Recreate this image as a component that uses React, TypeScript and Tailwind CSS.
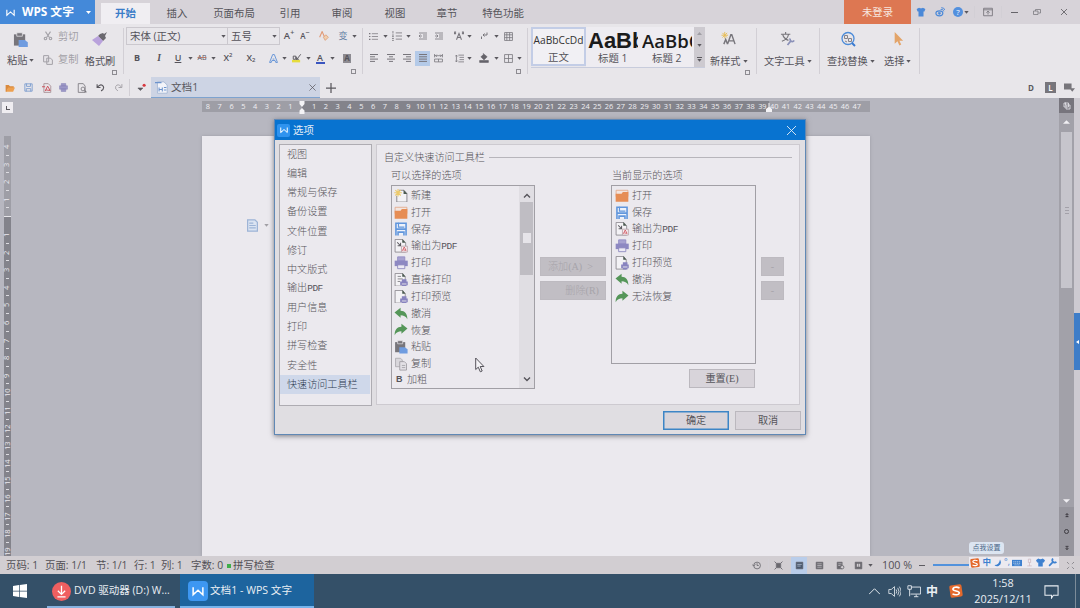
import React from "react";

type P = { className?: string; children?: React.ReactNode };

const Svg = ({ className = "w-4 h-4", children }: P) => (
  <svg viewBox="0 0 16 16" className={"shrink-0 " + className} fill="none" stroke="currentColor">
    {children}
  </svg>
);
const Caret = ({ className = "" }: P) => (
  <svg viewBox="0 0 5 3" className={"w-[5px] h-[3px] shrink-0 " + className}>
    <path d="M.3 0h4.400L2.500 2.700z" fill="#5a585e" />
  </svg>
);
const Sep = ({ className = "h-4" }: P) => <div className={"w-px shrink-0 bg-[#d2cfd5] " + className} />;
const Cell = ({ className = "", children }: P) => (
  <div className={"flex h-4 shrink-0 items-center justify-center whitespace-nowrap " + className}>{children}</div>
);
const Corner = () => <div className="mr-[6px] h-[5px] w-[5px] border border-[#8d8b91]" />;

const Lines = ({ w }: { w: [number, number][] }) => (
  <Svg>
    {w.map(([a, b], i) => (
      <path key={i} d={`M${a} ${4.5 + i * 2.3}H${b}`} stroke="#77757b" />
    ))}
  </Svg>
);

const WLogo = ({ className = "w-3 h-3" }: P) => (
  <Svg className={className}>
    <path d="M1.500 3v10l6.500-6 6.500 6V3M1.500 13l3-3" stroke="#fff" strokeWidth="2" />
  </Svg>
);

const icons: Record<string, React.ReactNode> = {
  new: (
    <Svg>
      <path d="M5.500 1.500h6l3.500 4v10h-12V8" fill="#f3f2f5" stroke="#7b797f" />
      <path d="M11 1l4.500 5h-4.500z" fill="#4b5a50" stroke="none" />
      <path d="M4.500 0v9M0 4.500h9M1.300 1.300l6.400 6.400M7.700 1.300L1.300 7.700" stroke="#ecca6c" strokeWidth="1.300" />
    </Svg>
  ),
  open: (
    <Svg>
      <path d="M1 9V1.500h14V9" fill="#f2e5df" stroke="#e3a98a" />
      <path d="M.5 5.500h7l1.500-2h6.500V15H.5z" fill="#e68d55" stroke="none" />
    </Svg>
  ),
  save: (
    <Svg>
      <path d="M1.500 1.500h13V15h-13z" fill="#eef2fa" stroke="none" />
      <path d="M2 16V1.500h12V16M2 8.500h12M4.500 16v-4h7v4" stroke="#6196dc" strokeWidth="1.900" />
      <path d="M5 1v5h7" stroke="#6196dc" strokeWidth="1.400" />
    </Svg>
  ),
  pdf: (
    <Svg>
      <path d="M1 .5h9l3.500 4V15.500H1z" fill="#f3f2f5" stroke="#88868c" />
      <path d="M9.500 0l4 4.500h-4z" fill="#4b5a50" stroke="none" />
      <path d="M3.500 4l4 4M7.500 4.500V8H4" stroke="#5e5c62" strokeWidth="1.200" />
      <path d="M8.500 8.500h7v7h-7z" fill="#f7eef0" stroke="#b8a0a7" />
      <path d="M9.500 14l2.300-4.500 2.200 4-3.500-.7" stroke="#cf5560" />
    </Svg>
  ),
  print: (
    <Svg>
      <path d="M4 1h8.500v5H4z" fill="#a7a2d0" stroke="#8f8ac2" />
      <path d="M.5 5.500h15.500v6.500H.5z" fill="#8d88c2" stroke="none" />
      <path d="M4 10.500h8.500v4.500H4z" fill="#eceaf4" stroke="#8a85bd" />
    </Svg>
  ),
  direct: (
    <Svg>
      <path d="M1 .5h9l3 4V15.500H1z" fill="#f3f2f5" stroke="#88868c" />
      <path d="M9.500 0l4 4.500h-4z" fill="#4b5a50" stroke="none" />
      <path d="M4 4h4M4 7h6M4 10h3" stroke="#77757b" />
      <path d="M7 10h9v4.500H7zM9 7.500h5.500v8.500H9z" fill="#8883bf" stroke="none" />
      <path d="M9 13h5.500" stroke="#eee" />
    </Svg>
  ),
  preview: (
    <Svg>
      <path d="M1 .5h9l3 4V15.500H1z" fill="#f3f2f5" stroke="#88868c" />
      <path d="M9.500 0l4 4.500h-4z" stroke="none" fill="#4b5a50" />
      <path d="M7 10h9v4.500H7zM9 7.500h5.500v8.500H9z" fill="#8883bf" stroke="none" />
      <path d="M9 13h5.500" stroke="#eee" />
    </Svg>
  ),
  undo: (
    <Svg>
      <path d="M.3 6.500L7.500.8v3.500C12.500 4.500 15.800 7.800 15.500 14.500 13.800 11 11 9.800 7.500 9.800v3z" fill="#559659" stroke="none" />
    </Svg>
  ),
  redo: (
    <Svg>
      <path d="M15.700 6.500L8.500.8v3.500C3.500 4.500.2 7.800.5 14.500 2.200 11 5 9.800 8.500 9.800v3z" fill="#559659" stroke="none" />
    </Svg>
  ),
  paste: (
    <Svg>
      <path d="M1 2.500h12v12H1z" fill="#77757b" stroke="none" />
      <path d="M4 .8h6v3.700H4z" fill="#77757b" stroke="#e8e6ea" strokeWidth=".8" />
      <path d="M6 8.500h6.500L15.800 11v5H6z" fill="#6f9ce0" stroke="none" />
    </Svg>
  ),
  copy: (
    <Svg>
      <path d="M1.500 1.500h6l2 2v8h-8z" fill="#d9d7dc" stroke="#acaab0" />
      <path d="M6.500 5.500h5.500l2.500 2.500v7.500h-8z" fill="#e3e1e6" stroke="#9c9aa0" />
      <path d="M9 10h4M9 12.500h4" stroke="#a3a1a7" />
    </Svg>
  ),
};

const SogouS = ({ className = "w-3 h-3" }: P) => (
  <Svg className={className}>
    <rect x="1" y="1" width="14" height="14" rx="2" fill="#e4692c" stroke="none" transform="rotate(-8 8 8)" />
    <path d="M12 4.500C9 3 4.500 3.500 4.500 6s7.500 1.500 7.300 4.300C11.500 12.500 7 13 4 11.300" stroke="#fff" strokeWidth="1.900" />
  </Svg>
);

function TitleBar() {
  const tabs: [string, string][] = [
    ["插入", "w-[54px]"],
    ["页面布局", "w-[60px]"],
    ["引用", "w-[52px]"],
    ["审阅", "w-[52px]"],
    ["视图", "w-[54px]"],
    ["章节", "w-[50px]"],
    ["特色功能", "w-[62px]"],
  ];
  return (
    <div className="flex h-6 shrink-0 bg-[#d7d3d9] text-[10.400px]">
      <div className="flex w-[95px] items-center bg-[#4489d9] text-white">
        <WLogo className="ml-[6px] h-[9px] w-[9px]" />
        <span className="ml-[7px] w-[53px] whitespace-nowrap text-[11.800px] font-bold">WPS 文字</span>
        <svg viewBox="0 0 5 3" className="ml-[11px] h-[3px] w-[5px]"><path d="M0 0h5L2.500 3z" fill="#fff" /></svg>
      </div>
      <div className="mt-[3px] ml-[6px] flex h-[21px] w-[49px] items-center justify-center bg-[#f0eef2] pt-px font-bold text-[#3a7cc8]">开始</div>
      {tabs.map(([t, w]) => (
        <div key={t} className={"flex items-center justify-center whitespace-nowrap pt-[4px] " + w}>{t}</div>
      ))}
      <div className="ml-auto flex w-[67px] items-center justify-center bg-[#dd7752] pt-[2px] text-[10.400px] text-[#f7e6df]">未登录</div>
      <div className="flex w-[169px] items-center">
        <Svg className="ml-[5px] h-[10px] w-[10px]"><path d="M1 3l4-2q3 2 6 0l4 2-1.500 4H12v8H4V7H2.500z" fill="#4a88d8" stroke="none" /></Svg>
        <Svg className="ml-[9px] h-[10px] w-[10px] text-[#4a88d8]">
          <ellipse cx="7" cy="10" rx="5.500" ry="4" strokeWidth="2" /><circle cx="7" cy="10" r="1.800" fill="#4a88d8" /><path d="M9 4q4-2 5 3M10 1q5 0 6 4" strokeWidth="1.500" />
        </Svg>
        <div className="ml-[8px] flex h-[10px] w-[10px] items-center justify-center rounded-full bg-[#5390de] text-[8px] text-white">?</div>
        <Caret className="ml-[1px]" />
        <Sep className="ml-[5px] h-3 bg-[#aaa8ae]" />
        <Svg className="ml-[8px] h-[10px] w-[10px] text-[#77757b]"><path d="M1 2h14v12H1zM1 4.500h14M8 12V7M5.500 9L8 6.500 10.500 9" strokeWidth="1.400" /></Svg>
        <Sep className="ml-[8px] h-3 bg-[#aaa8ae]" />
        <div className="ml-[9px] h-px w-[7px] bg-[#66646a]" />
        <Svg className="ml-[15px] h-[8px] w-[8px] text-[#77757b]"><path d="M1 6h9v7H1zM5 6V3h10v7h-4" strokeWidth="1.500" /></Svg>
        <Svg className="ml-[19px] h-[8px] w-[8px] text-[#66646a]"><path d="M2 2l12 12M14 2L2 14" strokeWidth="1.800" /></Svg>
      </div>
    </div>
  );
}

function ClipboardGroup() {
  return (
    <div className="flex w-[123px] flex-col">
      <div className="flex h-[44px] pt-[3px]">
        <div className="flex w-[37px] flex-col pl-[7px]">
          <div className="ml-[6px] mt-[5px] h-[16px] [&>svg]:h-[15px] [&>svg]:w-[15px]">{icons.paste}</div>
          <div className="mt-[5px] flex items-center whitespace-nowrap leading-[17px]">粘贴<Caret className="ml-[2px]" /></div>
        </div>
        <div className="flex w-[45px] flex-col gap-[6px] pl-[6px] text-[#a3a1a7]">
          <div className="flex h-[18px] items-center gap-[5px] pt-px">
            <Svg className="h-[10px] w-[10px]"><path d="M4 1l6 9M12 1L6 10" strokeWidth="1.800" /><circle cx="4" cy="12" r="2" strokeWidth="1.800" /><circle cx="12" cy="12" r="2" strokeWidth="1.800" /></Svg>剪切
          </div>
          <div className="flex h-[18px] items-center gap-[5px] pt-px">
            <Svg className="h-[10px] w-[10px]"><path d="M1 1h8v10H1zM6 5h6l3 3v7H6z" fill="#e6e4e8" strokeWidth="1.600" /></Svg>复制
          </div>
        </div>
        <div className="flex w-[38px] flex-col items-center pr-[2px]">
          <Svg className="mt-1 h-4 w-4"><path d="M8 3l3-1 1 1 3-2-2 4 1 2-3 3-5-5z" fill="#6a686e" stroke="none" /><path d="M6 5l5 5-4 5-7-6z" fill="#b9a2dc" stroke="none" /></Svg>
          <div className="mt-[6px] whitespace-nowrap leading-[17px]">格式刷</div>
        </div>
      </div>
      <div className="mt-[2px] flex justify-end"><Corner /></div>
    </div>
  );
}

function FontGroup() {
  return (
    <div className="flex w-[238px] flex-col pt-[3px]">
      <div className="flex h-[18px] items-center">
        <div className="ml-[2px] flex h-[18px] w-[102px] items-center justify-between border border-[#cbc8ce] pt-px pr-px pl-[3px] text-[10.400px] whitespace-nowrap">宋体 (正文)<Caret /></div>
        <div className="flex h-[18px] w-[52px] items-center justify-between border border-l-0 border-[#cbc8ce] pt-px pr-[2px] pl-[3px] text-[10.400px] whitespace-nowrap">五号<Caret /></div>
        <Cell className="ml-px w-4 text-[9.500px] font-semibold">A<sup className="text-[7px]">+</sup></Cell>
        <Cell className="w-4 text-[8px] font-semibold">A<sup className="text-[7px]">−</sup></Cell>
        <Sep className="ml-px" />
        <Cell className="ml-px w-4"><Svg className="h-[10px] w-[10px]"><path d="M1 10L5 1l4 9" stroke="#e19a76" strokeWidth="1.800" /><path d="M7 10l4-4 4 4-5 5z" fill="#f0cfae" stroke="#d98b63" /></Svg></Cell>
        <Sep className="ml-px" />
        <Cell className="ml-px w-4 text-[9px] text-[#6681a5]">变</Cell>
        <Caret className="ml-px" />
      </div>
      <div className="mt-1 flex h-[18px] items-center text-[9px]">
        <Cell className="ml-[5px] w-4 font-bold">B</Cell>
        <Cell className="ml-[6px] w-4 font-[Liberation_Serif] text-[9.500px] font-bold italic">I</Cell>
        <Cell className="ml-[3px] w-4 font-semibold underline">U</Cell>
        <Caret className="ml-[2px]" />
        <Cell className="ml-px w-4 text-[7px] line-through decoration-[#b27a70]">AB</Cell>
        <Caret className="ml-px" />
        <Cell className="ml-1 w-4 font-semibold">X<sup className="text-[6px]">2</sup></Cell>
        <Cell className="ml-[7px] w-4 font-semibold">X<sub className="text-[6px]">2</sub></Cell>
        <Sep className="ml-[3px]" />
        <Cell className="ml-[2px] w-4"><Svg className="h-[9px] w-[9px]"><path d="M1 15L6.500 1h3L15 15h-3l-1.300-3.500H5.300L4 15zM6.500 9h3" stroke="#5d8fd6" strokeWidth="1.600" /></Svg></Cell>
        <Caret className="ml-px" />
        <Cell className="ml-[2px] w-4"><Svg className="h-[10px] w-[10px]"><path d="M0 11h13v4H0z" fill="#e6dc3c" stroke="none" /><path d="M2 5h4v5H2zM7 11l7-9M7 6v4h4" stroke="#5a585e" strokeWidth="1.500" /></Svg></Cell>
        <Caret className="ml-px" />
        <Cell className="ml-px w-4"><div className="flex h-[11px] w-[9px] items-center justify-center border-b-2 border-[#3a55bf] font-semibold leading-none">A</div></Cell>
        <Caret className="ml-[2px]" />
        <Cell className="ml-1 w-4"><div className="flex h-[9px] w-[8px] items-center justify-center bg-[#8d8b91] text-[8px] font-bold">A</div></Cell>
      </div>
      <div className="mt-[2px] flex justify-end"><Corner /></div>
    </div>
  );
}

function ParagraphGroup() {
  return (
    <div className="flex w-[164px] flex-col pt-[3px] text-[#77757b]">
      <div className="flex h-[18px] items-center">
        <Cell className="ml-[2px] w-4"><Svg className="h-[9px] w-[9px]"><path d="M5 3h11M5 8h11M5 13h11" strokeWidth="1.300" /><path d="M0 3h2.500M0 8h2.500M0 13h2.500" strokeWidth="2.200" /></Svg></Cell>
        <Caret className="ml-[2px]" />
        <Cell className="ml-px w-4"><Svg className="h-[10px] w-[10px]"><path d="M6 3h10M6 8h10M6 13h10M1.500 0v4M0 6.500h3M0 9h3M0 12h3M0 15h3" strokeWidth="1.300" /></Svg></Cell>
        <Caret className="ml-px" />
        <Sep className="ml-[3px]" />
        <Cell className="w-4"><Svg className="h-[8px] w-[8px]"><path d="M0 2h16M8 6h8M8 10h8M0 14h16M6 8H0M3 5L0 8l3 3" strokeWidth="1.600" /></Svg></Cell>
        <Cell className="w-4"><Svg className="h-[8px] w-[8px]"><path d="M0 2h16M8 6h8M8 10h8M0 14h16M0 8h6M3 5l3 3-3 3" strokeWidth="1.600" /></Svg></Cell>
        <Sep className="ml-[3px]" />
        <Cell className="w-4"><Svg className="h-[10px] w-[10px]"><path d="M4 14L8 4l4 10M5.500 10.500h5M0 1l3 4M3 1L0 5M13 1l3 4M16 1l-3 4" strokeWidth="1.700" /></Svg></Cell>
        <Caret />
        <Sep className="ml-[2px]" />
        <Cell className="ml-px w-4"><Svg className="h-[8px] w-[8px]"><path d="M14 1v5H6M9 3L6 6l3 3M3 9v5" strokeWidth="2" /></Svg></Cell>
        <Caret className="ml-[2px]" />
        <Cell className="ml-px w-4"><Svg className="h-[9px] w-[9px]"><path d="M1 1h14v14H1zM1 5h14M1 10h14M5 1v14M10 1v14" strokeWidth="1.400" /></Svg></Cell>
      </div>
      <div className="mt-1 flex h-[18px] items-center">
        <Cell className="ml-[3px] w-4"><Lines w={[[4, 12], [4, 9], [4, 12], [4, 9]]} /></Cell>
        <Cell className="ml-px w-4"><Lines w={[[4, 12], [6, 10], [4, 12], [6, 10]]} /></Cell>
        <Cell className="w-4"><Lines w={[[4, 12], [7, 12], [4, 12], [7, 12]]} /></Cell>
        <div className="flex h-[15px] w-[15px] items-center justify-center bg-[#b4cae8]"><Lines w={[[4, 12], [4, 12], [4, 12], [4, 12]]} /></div>
        <Cell className="w-4"><Svg className="h-[9px] w-[9px]"><path d="M1 0v6M15 0v6M1 3h14M5 1L3 3l2 2M11 1l2 2-2 2M1 9h14M1 14h14M1 9v5M15 9v5M8 9v5" strokeWidth="1.400" /></Svg></Cell>
        <Sep className="ml-1" />
        <Cell className="w-4"><Svg className="h-[9px] w-[9px]"><path d="M6 2h10M8 6h8M8 10h8M6 14h10M2.500 2v12M0 4.500L2.500 2 5 4.500M0 11.500L2.500 14 5 11.500" strokeWidth="1.400" /></Svg></Cell>
        <Caret />
        <Sep className="ml-[2px]" />
        <Cell className="ml-px w-4"><Svg className="h-[10px] w-[10px] text-[#65636a]"><path d="M3 6l5-4 5 4-5 5zM7 0v5M1 12h14v3H1z" fill="#65636a" /></Svg></Cell>
        <Caret className="ml-[2px]" />
        <Cell className="ml-px w-4"><Svg className="h-[9px] w-[9px]"><path d="M1 1h14v14H1zM1 8h14M8 1v14" strokeWidth="1.400" /></Svg></Cell>
        <Caret className="ml-px" />
      </div>
      <div className="mt-[2px] flex justify-end"><Corner /></div>
    </div>
  );
}

function StyleGallery() {
  return (
    <div className="mt-[3px] ml-[3px] flex h-[41px] w-[174px] border-b border-[#c8ccdc]">
      <div className="flex h-[39px] w-[55px] shrink-0 flex-col items-center border-2 border-[#c3cde6] bg-[#f1f0f4]">
        <span className="mt-[3px] h-[16px] text-[10.200px] leading-[16px] text-[#333]">AaBbCcDd</span>
        <span className="mt-[2px] text-[10.400px] leading-[15px]">正文</span>
      </div>
      <div className="flex w-[108px] shrink-0 bg-[#eeecf1]">
        <div className="flex w-[54px] flex-col pl-[2px]">
          <div className="w-[50px] overflow-hidden pt-[2px] font-[Liberation_Sans] text-[22px] leading-[23px] font-bold text-[#1b1b1b]">AaBb</div>
          <span className="pl-[10px] text-[10.400px] leading-[13px]">标题 1</span>
        </div>
        <div className="flex w-[54px] flex-col pl-[2px]">
          <div className="w-[50px] overflow-hidden pt-[2px] text-[18.500px] leading-[23px] font-semibold text-[#1b1b1b]">AaBbC</div>
          <span className="pl-[10px] text-[10.400px] leading-[13px]">标题 2</span>
        </div>
      </div>
      <div className="flex w-[11px] flex-col items-center justify-around bg-[#cdcad0]">
        <svg viewBox="0 0 5 3" className="h-[3px] w-[5px]"><path d="M0 3h5L2.500 0z" fill="#a09ea4" /></svg>
        <Caret />
        <div className="flex flex-col items-center gap-px"><div className="h-px w-[5px] bg-[#5a585e]" /><Caret /></div>
      </div>
    </div>
  );
}

const BigButton = ({ className = "", icon, label }: P & { icon: React.ReactNode; label: string }) => (
  <div className={"flex shrink-0 flex-col " + className}>
    <div className="mt-[7px] flex h-[17px] justify-center pr-[9px]">{icon}</div>
    <div className="mt-[5px] flex items-center whitespace-nowrap leading-[17px]">{label}<Caret className="ml-[2px]" /></div>
  </div>
);

function Ribbon() {
  return (
    <div className="flex h-[53px] shrink-0 bg-[#e8e6ea] text-[10.200px]">
      <ClipboardGroup />
      <Sep className="mt-1 h-[46px]" />
      <FontGroup />
      <Sep className="mt-1 h-[46px]" />
      <ParagraphGroup />
      <Sep className="mt-1 h-[46px]" />
      <StyleGallery />
      <div className="flex w-[51px] flex-col">
        <BigButton className="pl-[5px]" label="新样式" icon={
          <Svg className="h-[15px] w-[15px]"><path d="M4 1v7M.5 4.500h7M1.500 2l5 5M6.500 2l-5 5" stroke="#e8bd55" /><path d="M7 14l3.500-10h1L15 14M8.500 10.500h5M3 14l2-5 2 5" stroke="#77757b" strokeWidth="1.500" /></Svg>
        } />
        <div className="flex justify-end"><Corner /></div>
      </div>
      <Sep className="mt-1 h-[46px]" />
      <BigButton className="w-[62px] pl-[7px]" label="文字工具" icon={
        <Svg className="h-[15px] w-[15px]"><path d="M1 3.500h10M6 1v2.500M9 4q-1 5-7 7M3 4q1 4 6 6" stroke="#77757b" strokeWidth="1.200" /><path d="M8 15l4-5M11 8a2 2 0 1 0 4 2" stroke="#8a90b8" strokeWidth="1.800" /></Svg>
      } />
      <Sep className="mt-1 h-[46px]" />
      <BigButton className="w-[57px] pl-[7px]" label="查找替换" icon={
        <Svg className="h-4 w-4"><circle cx="8" cy="7.500" r="6" stroke="#4b8bd9" strokeWidth="1.300" /><path d="M12 12l3 3" stroke="#3b7bd0" strokeWidth="2" /><path d="M4.500 7.500V4.500h3v3zM8.500 7.500h3v3h-3zM5 10l2 1" stroke="#85838a" /></Svg>
      } />
      <BigButton className="w-[42px] pl-[7px]" label="选择" icon={
        <Svg className="h-[15px] w-[15px]"><path d="M5 1v12.500l3-2.500 2 4.500 2-1-2-4h4z" fill="#e3a469" stroke="none" /></Svg>
      } />
      <Sep className="mt-1 h-[46px]" />
    </div>
  );
}

function DocTabs() {
  const i = "h-[10px] w-[10px] ";
  return (
    <div className="flex h-[21px] shrink-0 items-center bg-[#e8e6ea] text-[#5a585e]">
      <Svg className={i + "ml-[5px]"}><path d="M1 3h5l2 2h6v3H5l-2 6H1z" fill="#d98a3e" stroke="none" /><path d="M5 7h11l-3 7H2z" fill="#eea04f" stroke="none" /></Svg>
      <Svg className="ml-[9px] h-[9px] w-[9px] text-[#7d9dcf]"><path d="M1.500 1.500h13v13h-13zM4.500 1v5h7V1M4 15v-5h8v5" strokeWidth="1.600" /></Svg>
      <Svg className={i + "ml-[9px]"}><path d="M3 1h7l4 4v10H3z" stroke="#a2898f" strokeWidth="1.300" /><path d="M5 13l4-8 4 7-7-1M0 6h5" stroke="#cb4d56" strokeWidth="1.500" /></Svg>
      <Svg className="ml-[7px] h-[9px] w-[9px]"><path d="M4 1h8v4H4zM1 5h14v6H1zM4 10h8v5H4z" fill="#9c98c8" stroke="#8884b8" /></Svg>
      <Svg className="ml-[9px] h-[10px] w-[10px] text-[#77757b]"><path d="M2 1h8l3 4v10H2z" strokeWidth="1.300" /><circle cx="9.500" cy="9.500" r="3" strokeWidth="1.300" /><path d="M12 12l3 3" strokeWidth="2" /></Svg>
      <Svg className="ml-[9px] h-[9px] w-[9px]"><path d="M3 7Q9 0 13 6q2 5-4 8M2 2v6h6" strokeWidth="2" /></Svg>
      <Svg className="ml-[9px] h-[9px] w-[9px] text-[#a09ea4]"><path d="M13 7Q7 0 3 6q-2 5 4 8M14 2v6H8" strokeWidth="1.600" /></Svg>
      <Sep className="ml-[6px] h-[17px]" />
      <Svg className={i + "ml-[6px]"}><path d="M3 8h8l-4 4z" fill="#5a585e" stroke="#5a585e" /><circle cx="13" cy="3.500" r="2.500" fill="#d8383e" stroke="none" /></Svg>
      <div className="ml-[5px] flex h-[21px] w-[169px] items-center border-b border-[#7ea3cf] bg-[#cdd4e4]">
        <Svg className="ml-[4px] h-[13px] w-[13px]"><path d="M3 1h8l4 4v10H3z" fill="#f3f4f9" stroke="#9fb3d2" /><path d="M0 2h8M5 8v5M9 8v5M5 10.500h4M11 8h3M11 11h3" stroke="#6c93cd" strokeWidth="1.300" /></Svg>
        <span className="ml-[3px] pt-[2px] text-[10.600px] whitespace-nowrap">文档1</span>
        <Svg className="mr-[4px] ml-auto h-[7px] w-[7px]"><path d="M1 1l14 14M15 1L1 15" strokeWidth="1.700" /></Svg>
      </div>
      <Svg className="ml-[6px] h-[10px] w-[10px]"><path d="M8 0v16M0 8h16" strokeWidth="2" /></Svg>
      <span className="ml-auto text-[8px] font-bold">D</span>
      <div className="ml-[11px] flex h-[11px] w-[11px] items-center justify-center bg-[#77757b] text-[8px] font-semibold text-white">L</div>
      <Svg className="mr-[5px] ml-[8px] h-[11px] w-[11px]"><path d="M0 2h11v9H0zM8 9h8l-4 5z" fill="#77757b" stroke="none" /></Svg>
    </div>
  );
}

const hNums = Array.from({ length: 56 }, (_, i) => i - 8);
const vNums = Array.from({ length: 24 }, (_, i) => i - 4);

function Workspace() {
  return (
    <div className="flex h-[458px] shrink-0 bg-[#b7b7c0]">
      <div className="flex w-[202px] flex-col overflow-hidden">
        <div className="mt-[4px] ml-[2px] flex h-[11px] w-[11px] shrink-0 items-center justify-center bg-[#efedf1]"><div className="h-[4px] w-[4px] border-b border-l border-[#5a585e]" /></div>
        <div className="mt-[23px] ml-[4px] flex h-[420px] w-[7px] flex-col items-center bg-[linear-gradient(#9e9ea6_80px,#e6e5e9_80px,#e6e5e9_81px,#83838b_81px)] text-[7.500px] leading-none text-[#eceaf0]">
          <div className="h-[2px] shrink-0" />
          {vNums.map((n) => (
            <div key={n} className="flex h-[17.600px] w-[7px] shrink-0 flex-col items-center">
              <div className="flex h-[17.600px] items-center justify-center"><span className="-rotate-90">{n === 0 ? "" : Math.abs(n)}</span></div>
              {n !== 0 && <div className="-mt-px h-px w-[3px] shrink-0 bg-[#dddce1]" />}
            </div>
          ))}
        </div>
      </div>
      <div className="flex w-[668px] flex-col">
        <div className="relative mt-[3px] flex h-[11px] shrink-0 items-center bg-[linear-gradient(90deg,#9e9ea6_100px,#83838b_100px,#83838b_567px,#9e9ea6_567px)] text-[7.400px] leading-none text-[#f0eff3]">
          {hNums.map((n) => (
            <span key={n} className="w-[11.810px] shrink-0 text-center">{n === 0 ? "" : Math.abs(n)}</span>
          ))}
          <svg viewBox="0 0 6 14" className="absolute top-0 left-[97px] h-[14px] w-[6px]"><path d="M.5 0h5v3L3 6 .5 3zM.5 13V9.500L3 7l2.500 2.500V13z" fill="#f4f3f6" /></svg>
          <svg viewBox="0 0 6 9" className="absolute top-[2px] left-[564px] h-[9px] w-[6px]"><path d="M0 9V6l2.500-2V0h1v4L6 6v3z" fill="#f4f3f6" /></svg>
        </div>
        <div className="mt-[24px] flex h-[420px] items-start bg-[#ebe9ee] shadow-[0_0_3px_#9b9ba4]">
          <Svg className="mt-[83px] ml-[44px] h-[13px] w-[13px]"><path d="M2 1h9l3 3v11H2z" fill="#dbe4f2" stroke="#9db4d6" strokeWidth="1.500" /><path d="M4 5h5M4 8h8M4 11h8" stroke="#9db4d6" strokeWidth="1.500" /></Svg>
          <Caret className="mt-[88px] ml-[5px] opacity-50" />
        </div>
      </div>
      <div className="ml-auto flex w-[15px] flex-col items-center bg-[#a2a1a9]">
        <div className="mb-[7px] flex h-[15px] w-full items-center justify-center bg-[#77757d]"><Svg className="h-[8px] w-[8px] text-[#e4e3e8]"><path d="M2 2h9v8H2zM6 6h8v8H6zM5 1v6" strokeWidth="1.700" /></Svg></div>
        <svg viewBox="0 0 8 4" className="h-[4px] w-[7px]"><path d="M4 0l4 4H0z" fill="#f0eff3" /></svg>
        <div className="mt-[8px] flex h-[156px] w-[11px] flex-col items-center justify-center gap-[2px] bg-[#c6c5cc]">
          <div className="h-px w-1 bg-[#a3a1a9]" /><div className="h-px w-1 bg-[#a3a1a9]" /><div className="h-px w-1 bg-[#a3a1a9]" />
        </div>
        <svg viewBox="0 0 8 4" className="mt-[211px] h-[4px] w-[7px]"><path d="M4 4l4-4H0z" fill="#f0eff3" /></svg>
        <div className="mt-[4px] flex w-full grow flex-col items-center justify-around bg-[#96959d] text-[#3d3b41]">
          <Svg className="h-[6px] w-[6px]"><path d="M4 7l4-4 4 4zM4 13l4-4 4 4z" fill="#3d3b41" /></Svg>
          <div className="h-[5px] w-[5px] rounded-full border border-[#3d3b41]" />
          <Svg className="h-[6px] w-[6px]"><path d="M4 3l4 4 4-4zM4 9l4 4 4-4z" fill="#3d3b41" /></Svg>
        </div>
      </div>
      <div className="flex w-[6px] flex-col bg-[#cdcad1]">
        <div className="mt-[215px] flex h-[57px] items-center justify-center bg-[#3e7dc8]"><svg viewBox="0 0 3 4" className="h-[4px] w-[3px]"><path d="M3 0v4L0 2z" fill="#fff" /></svg></div>
      </div>
    </div>
  );
}

function StatusBar() {
  const d = "h-[9px] w-[9px] text-[#6a686e] ";
  return (
    <div className="flex h-[18px] shrink-0 items-center bg-[#d2ced2] text-[10.400px] whitespace-nowrap text-[#525056]">
      <div className="flex items-center pt-[2px]">
        <span className="ml-[6px] w-[39px]">页码: 1</span>
        <span className="w-[51px]">页面: 1/1</span>
        <span className="w-[34px]">节: 1/1</span>
        <Sep className="h-3 bg-[#b5b2b8]" />
        <span className="ml-[3px] w-[27px]">行: 1</span>
        <span className="w-[23px]">列: 1</span>
        <Sep className="h-3 bg-[#b5b2b8]" />
        <span className="ml-[6px] w-[33px]">字数: 0</span>
        <Sep className="h-3 bg-[#b5b2b8]" />
        <div className="ml-[2px] h-[4px] w-[4px] bg-[#3fae4a]" />
        <span className="ml-[2px] w-[45px]">拼写检查</span>
        <Sep className="h-3 bg-[#b5b2b8]" />
      </div>
      <div className="ml-[473px] flex items-center">
        <Svg className={d}><circle cx="9" cy="8" r="6" strokeWidth="1.500" /><path d="M9 4v4h3M0 6l3 3 3-3" strokeWidth="1.500" /></Svg>
        <Sep className="ml-[7px] h-3 bg-[#b5b2b8]" />
        <Svg className={d + "ml-[5px]"}><path d="M4 4h8v8H4z" fill="#6a686e" /><path d="M1 1l3 3M15 1l-3 3M1 15l3-3M15 15l-3-3" strokeWidth="1.600" /></Svg>
        <div className="ml-[8px] flex h-[17px] w-[16px] items-center justify-center bg-[#b9cdea]"><Svg className={d}><path d="M2 2h12v12H2z" fill="#4a586e" /><path d="M4 6h8M4 9h6" stroke="#dce6f6" /></Svg></div>
        <Svg className={d + "ml-[8px]"}><path d="M2 2h12v12H2z" fill="#6a686e" /><path d="M4 5h8M4 8h8M4 11h8" stroke="#dddbe0" /></Svg>
        <Svg className={d + "ml-[12px]"}><path d="M2 2h9v12H2z" fill="#6a686e" /><path d="M4 5h6M4 8h4" stroke="#dddbe0" /><circle cx="11" cy="11" r="3" fill="#d2ced2" strokeWidth="1.500" /></Svg>
        <Svg className={d + "ml-[9px]"}><path d="M2 2h12v12H2z" fill="#6a686e" /><path d="M5 5h3v5H5zM9 5h2v5H9z" fill="#d2ced2" stroke="none" /></Svg>
        <Caret className="ml-[5px]" />
        <span className="ml-[9px] w-[37px] text-[10.800px]">100 %</span>
        <div className="h-px w-[6px] bg-[#5e5c62]" />
        <div className="ml-[8px] h-[2px] w-[40px] bg-[#5292dc]" />
        <Svg className={d + "ml-[93px]"}><path d="M2 2l4 4M14 2l-4 4M2 14l4-4M14 14l-4-4" strokeWidth="1.500" strokeDasharray="2 1" /></Svg>
      </div>
    </div>
  );
}

function Taskbar() {
  return (
    <div className="flex h-[34px] shrink-0 items-center bg-[#345068] text-[10.800px] whitespace-nowrap text-[#e9eef3]">
      <svg viewBox="0 0 14 14" className="ml-[13px] h-[14px] w-[14px]"><path d="M0 2l6-1v5.700H0zM6.700.9L14 0v6.700H6.700zM0 7.400h6V13l-6-1zM6.700 7.400H14V14l-7.300-1z" fill="#fff" /></svg>
      <div className="ml-[20px] flex h-full w-[128px] items-center border-b-2 border-[#86b2df] pt-[2px]">
        <div className="ml-[5px] flex h-[19px] w-[19px] shrink-0 items-center justify-center rounded-full bg-[#ef5f60]"><Svg className="h-[13px] w-[13px]"><path d="M8 1v10M3.500 7L8 11.500 12.500 7M3 14.500h10" stroke="#fff" strokeWidth="1.600" /></Svg></div>
        <span className="ml-[3px] text-[10.500px]">DVD 驱动器 (D:) W...</span>
      </div>
      <div className="ml-[5px] flex h-full w-[134px] items-center border-b-2 border-[#76b4ec] bg-[#1d649e] pt-[2px]">
        <div className="ml-[8px] flex h-[20px] w-[20px] items-center justify-center rounded-[4px] bg-[#3d97f2]"><WLogo className="h-[12px] w-[12px]" /></div>
        <span className="ml-[2px] text-[10.600px]">文档1 - WPS 文字</span>
      </div>
      <div className="ml-auto flex h-full items-center">
        <Svg className="h-[11px] w-[11px]"><path d="M0 12l8-8 8 8" strokeWidth="1.400" /></Svg>
        <Svg className="ml-[8px] h-[13px] w-[13px]"><path d="M1 5.500h3L8 2v12L4 10.500H1zM10 5.500q1.500 2.500 0 5M12 3.500q3 4.500 0 9M14 2q4 6 0 12" /></Svg>
        <Svg className="ml-[6px] h-[14px] w-[14px]"><path d="M5 3.500h10.500v8H4M8 14.500h5M10.500 12v2.500M1 2h4v4H1zM3 6v8" /></Svg>
        <span className="mt-[2px] ml-[5px] w-[12px] text-[12px] font-bold">中</span>
        <SogouS className="ml-[11px] h-[14px] w-[14px]" />
        <div className="ml-[9px] flex w-[62px] flex-col items-center text-[10.800px] leading-[16px]"><span>1:58</span><span>2025/12/11</span></div>
        <Svg className="ml-[10px] h-[15px] w-[15px]"><path d="M1 2h14v10h-5l-2 3v-3H1z" strokeWidth="1.100" /></Svg>
        <div className="mr-[4px] ml-[16px] h-full w-px bg-[#7d8c99]" />
      </div>
    </div>
  );
}

const Label = ({ text }: { text: string }) => {
  const [before, after] = text.split("PDF");
  return (
    <span className="flex items-baseline">
      {before}
      {after !== undefined && <span className="font-[Liberation_Mono] text-[9.500px] tracking-[-0.500px]">PDF</span>}
    </span>
  );
};

const Item = ({ icon, label }: { icon: React.ReactNode; label: string }) => (
  <div className="flex h-[16.850px] shrink-0 items-center gap-[3px] whitespace-nowrap">
    <div className="flex w-[14px] [&>svg]:h-[13.500px] [&>svg]:w-[14px]">{icon}</div>
    <Label text={label} />
  </div>
);

function OptionsDialog() {
  const nav = ["视图", "编辑", "常规与保存", "备份设置", "文件位置", "修订", "中文版式", "输出PDF", "用户信息", "打印", "拼写检查", "安全性", "快速访问工具栏"];
  const left: [string, string][] = [["new", "新建"], ["open", "打开"], ["save", "保存"], ["pdf", "输出为PDF"], ["print", "打印"], ["direct", "直接打印"], ["preview", "打印预览"], ["undo", "撤消"], ["redo", "恢复"], ["paste", "粘贴"], ["copy", "复制"]];
  const right: [string, string][] = [["open", "打开"], ["save", "保存"], ["pdf", "输出为PDF"], ["print", "打印"], ["preview", "打印预览"], ["undo", "撤消"], ["redo", "无法恢复"]];
  const btn = "flex items-center justify-center border border-[#bbb8be] bg-[#d8d4da] whitespace-nowrap ";
  const off = "flex items-center bg-[#c1bec4] border border-[#bdbac0] whitespace-nowrap text-[#a7a4aa] ";
  return (
    <div className="absolute top-[119px] left-[274px] flex h-[316px] w-[532px] flex-col border border-[#6088b5] bg-[#e0dee2] font-[Liberation_Serif,Noto_Sans_CJK_SC,serif] text-[10.100px] font-light text-[#56545a] shadow-[0_1px_5px_#77777f]">
      <div className="flex h-[20px] shrink-0 items-center bg-[#0873d0] font-[Liberation_Sans,Noto_Sans_CJK_SC,sans-serif] text-[10.400px] font-normal text-[#e4edf7]">
        <div className="ml-[2px] flex h-[13px] w-[13px] items-center justify-center rounded-[2px] bg-[#2f93ef]"><WLogo className="h-[8px] w-[8px]" /></div>
        <span className="ml-[3px] pt-px">选项</span>
        <Svg className="mr-[9px] ml-auto h-[9px] w-[9px]"><path d="M0 0l16 16M16 0L0 16" strokeWidth="1.600" /></Svg>
      </div>
      <div className="flex h-[266px] shrink-0 pt-[4px] pl-[4px]">
        <div className="flex h-[262px] w-[93px] shrink-0 flex-col border border-[#aeacb2] bg-[#ebe9ee]">
          {nav.map((n, i) => (
            <div key={n} className={"flex h-[19.150px] shrink-0 items-center pl-[7px] whitespace-nowrap " + (i === 12 ? "mr-px bg-[#cfd8ea] text-[#2e3b52]" : "")}><Label text={n} /></div>
          ))}
        </div>
        <div className="ml-[4px] flex h-[261px] w-[424px] flex-col border border-[#cdcad0] bg-[#ebe9ee]">
          <div className="mt-[4px] flex h-[17px] items-center whitespace-nowrap"><span className="ml-[7px]">自定义快速访问工具栏</span><div className="mr-[7px] ml-[4px] h-px grow bg-[#b7b5bb]" /></div>
          <div className="flex h-[18px] items-center pt-px whitespace-nowrap"><span className="ml-[14px] w-[221px]">可以选择的选项</span><span>当前显示的选项</span></div>
          <div className="mt-px flex">
            <div className="ml-[14px] flex h-[204px] w-[144px] shrink-0 border border-[#a19fa5]">
              <div className="flex grow flex-col overflow-hidden pt-px pl-[2px]">
                {left.map(([k, l]) => <Item key={l} icon={icons[k]} label={l} />)}
                <div className="flex h-[14px] items-center whitespace-nowrap"><span className="w-[13px] pl-[2px] font-[Liberation_Sans] text-[9px] font-bold">B</span>加粗</div>
              </div>
              <div className="flex w-[15px] flex-col items-center justify-between bg-[#e0dee3] pt-[6px] pb-[5px]">
                <Svg className="h-[8px] w-[8px]"><path d="M2 11l6-6 6 6" strokeWidth="2.800" /></Svg>
                <div className="mb-auto mt-[2px] flex h-[73px] w-[13px] justify-center bg-[#bfbdc3]"><div className="mt-[31px] h-[10px] w-[8px] bg-[#e6e4e9]" /></div>
                <Svg className="h-[8px] w-[8px]"><path d="M2 5l6 6 6-6" strokeWidth="2.800" /></Svg>
              </div>
            </div>
            <div className="mt-[72px] ml-[5px] flex w-[66px] flex-col gap-[5px]">
              <div className={off + "h-[19px] pl-[7px]"}>添加(A)&nbsp; &gt;</div>
              <div className={off + "h-[19px] justify-end pr-[6px]"}>删除(R)</div>
            </div>
            <div className="ml-[5px] flex w-[145px] flex-col">
              <div className="flex h-[179px] flex-col border border-[#a19fa5] pt-px pl-[3px]">
                {right.map(([k, l]) => <Item key={l} icon={icons[k]} label={l} />)}
              </div>
              <div className={btn + "mt-[5px] ml-[78px] h-[19px] w-[66px] font-normal"}>重置(E)</div>
            </div>
            <div className="mt-[72px] ml-[5px] flex w-[23px] flex-col gap-[5px]">
              <div className={off + "h-[19px] justify-center"}>-</div>
              <div className={off + "h-[19px] justify-center"}>-</div>
            </div>
          </div>
        </div>
      </div>
      <div className="mt-[5px] flex justify-end gap-[6px] pr-[4px]">
        <div className="flex h-[19px] w-[66px] items-center justify-center border border-[#3d85c6] bg-[#d8d4da] font-normal shadow-[inset_0_0_0_0.500px_#3d85c6]">确定</div>
        <div className={btn + "h-[19px] w-[66px] font-normal"}>取消</div>
      </div>
    </div>
  );
}

function InputMethodBar() {
  return (
    <div className="absolute top-[542px] left-[969px] flex w-[90px] flex-col text-[#3d80cf]">
      <div className="flex h-[12px] w-[35px] items-center justify-center rounded-[3px] bg-[#dce5f1] text-[7px] whitespace-nowrap text-[#4a6688]">点我设置</div>
      <div className="mt-[3px] flex h-[11px] items-center justify-between bg-[#eceaf0] pr-[2px] pl-[1px] text-[8.500px]">
        <SogouS className="h-[10px] w-[10px]" />
        <span className="leading-none font-bold">中</span>
        <Svg className="h-[8px] w-[8px]"><path d="M12 1q5 9-3 13-5 2-8-2 9 0 11-11z" fill="#3d80cf" stroke="none" /></Svg>
        <span className="leading-none">°,</span>
        <Svg className="h-[10px] w-[10px]"><path d="M0 3h16v10H0z" fill="#3d80cf" stroke="none" /><path d="M2 6h12M2 8.500h12M4 11h8" stroke="#dfe8f5" strokeDasharray="2 1" /></Svg>
        <Svg className="h-[9px] w-[9px]"><path d="M6 2h4v6H6zM8 8v6M4 14h8" stroke="#d0bcc4" strokeWidth="1.500" /></Svg>
        <Svg className="h-[9px] w-[9px]"><path d="M0 4l4-3q4 2 8 0l4 3-2 4h-2v7H4V8H2z" fill="#3d80cf" stroke="none" /></Svg>
        <Svg className="h-[9px] w-[9px]"><path d="M2 14l7-7M9 1a4 4 0 1 0 6 6" strokeWidth="3" /></Svg>
      </div>
    </div>
  );
}

export default function App() {
  return (
    <div className="relative flex h-[608px] w-[1080px] flex-col overflow-hidden bg-[#e8e6ea] font-[Open_Sans,Noto_Sans_CJK_SC,sans-serif] text-[#55535a]">
      <TitleBar />
      <Ribbon />
      <DocTabs />
      <Workspace />
      <StatusBar />
      <Taskbar />
      <OptionsDialog />
      <InputMethodBar />
      <svg viewBox="0 0 10 16" className="absolute top-[357px] left-[475px] h-[16px] w-[10px]"><path d="M.7 1v11.500l2.600-2.300 2 4.600 1.900-.8-2-4.500h3.700z" fill="#f3f2f5" stroke="#55535a" /></svg>
    </div>
  );
}
